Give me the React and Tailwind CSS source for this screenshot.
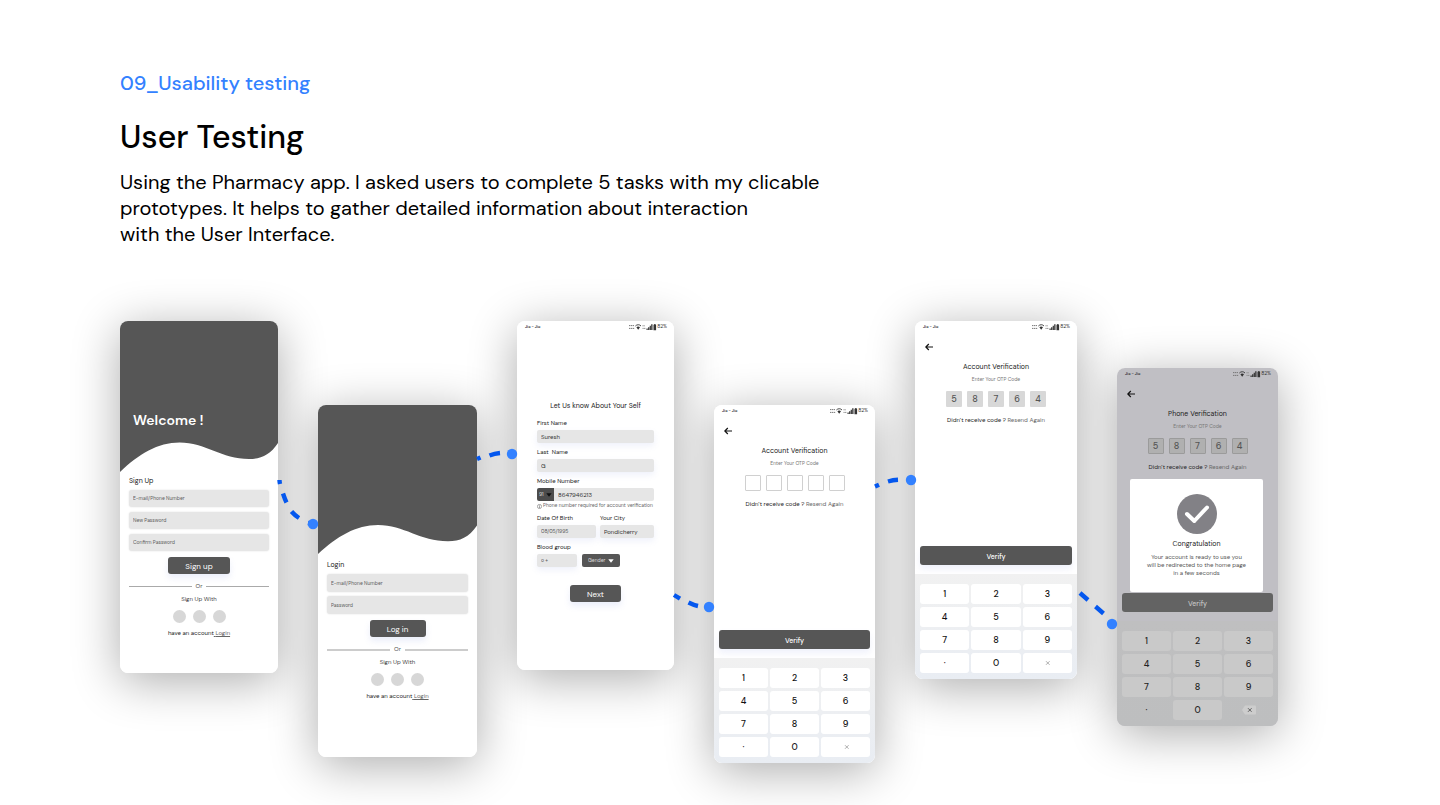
import React from "react";

const KEYS = ["1", "2", "3", "4", "5", "6", "7", "8", "9", "·", "0"];

function Phone({ className, children }) {
  return (
    <article
      className={
        "relative flex min-w-[156px] basis-0 flex-col rounded-lg before:absolute before:inset-0 before:-z-10 before:rounded-lg before:shadow-[0_8px_48px_rgba(0,0,0,0.33)] before:content-[''] " +
        className
      }
    >
      {children}
    </article>
  );
}

function Connector({ className, d, cx, cy }) {
  return (
    <svg
      className={"z-10 w-10 flex-none overflow-visible " + className}
      viewBox="0 0 40 60"
      height="60"
      aria-hidden="true"
    >
      <path d={d} fill="none" stroke="#0457ee" strokeWidth="4.4" />
      <circle cx={cx} cy={cy} r="5.2" fill="#3381ff" />
    </svg>
  );
}

function StatusBar() {
  return (
    <div className="flex h-[11px] items-center justify-between pl-2 pr-[7px] leading-none text-[#333]">
      <span className="text-[4px] font-semibold">Jio - Jio</span>
      <span className="flex items-center text-[5px]">
        <svg width="28" height="8" viewBox="0 0 28 8" fill="#333" aria-hidden="true">
          <path d="M0 2.600h5M0 5.400h5.600" stroke="#777" strokeWidth="1" strokeDasharray="1.400 0.500" />
          <path d="M7.400 4.300C8.400 3.300 10 3.300 11 4.300L9.200 6.700Z" />
          <path d="M6.400 3C8 1.300 10.500 1.300 12 3" fill="none" stroke="#333" strokeWidth=".9" />
          <path d="M13.500 2.800h2.300M13.500 5.400h3.300" stroke="#888" strokeWidth="1" strokeDasharray="1.200 0.400" />
          <path d="M17.500 5.500h1.200v1.500h-1.200zM19.100 4.300h1.200V7h-1.200zM20.700 2.800h1.200V7h-1.200zM22.200 1.200h1.300V7h-1.300z" />
          <path d="M25.200 1h1.300v.8h.6V7.200h-2.600V1.800h.7z" />
        </svg>
        82%
      </span>
    </div>
  );
}

function Wave({ className }) {
  return (
    <svg className={"block w-full rounded-t-lg " + className} viewBox="0 0 159 151" preserveAspectRatio="none" aria-hidden="true">
      <path
        d="M0 0H159V122C151 134 142 138 130 138C102 138 86 121.500 60 121.500C38 121.500 19 133 0 151Z"
        fill="#565656"
      />
    </svg>
  );
}

function AuthForm({ title, fields, action, buttonClass, inputClass, lineClass, gapClass }) {
  return (
    <form className="flex flex-col px-[9px]" onSubmit={(e) => e.preventDefault()}>
      <h2 className="text-[7px] leading-[10px] text-[#222]">{title}</h2>
      <div className={"flex flex-col " + gapClass}>
        {fields.map((field) => (
          <input
            key={field}
            type={field.includes("Password") ? "password" : "text"}
            aria-label={field}
            placeholder={field}
            className={
              "w-full rounded-[3px] bg-[#e6e6e6] px-1 text-[5px] shadow-[0_0_2px_rgba(0,0,0,0.12)] placeholder:text-[#5c5c5c] " +
              inputClass
            }
          />
        ))}
      </div>
      <button
        type="submit"
        className={"mt-1.5 h-[17px] self-center rounded-[3px] bg-[#565656] text-[8px] leading-none text-white shadow-[0_4px_6px_rgba(120,140,220,0.15)] " + buttonClass}
      >
        {action}
      </button>
      <div className="mt-2 flex items-center gap-1 text-[6px] leading-[9px] text-[#555]">
        <span className={"flex-1 " + lineClass} />
        Or
        <span className={"flex-1 " + lineClass} />
      </div>
      <p className="mt-1 text-center text-[6px] leading-2 text-[#444]">Sign Up With</p>
      <div className="mt-[7px] flex justify-center gap-[7px]">
        {["first", "second", "third"].map((p) => (
          <button key={p} type="button" aria-label={"Sign up with " + p + " provider"} className="size-[13px] rounded-full bg-[#d7d7d7]" />
        ))}
      </div>
      <p className="mt-1.5 text-center text-[6px] leading-2 text-[#222]">
        have an account
        <a href="#login" className="text-[#666] underline">
          {" "}
          Login
        </a>
      </p>
    </form>
  );
}

function Field({ id, label, value, className = "", muted = false }) {
  return (
    <div className={"flex min-w-0 flex-col gap-[3px] " + className}>
      <label htmlFor={id} className="whitespace-pre text-[6px] leading-2 text-[#222]">
        {label}
      </label>
      <input
        id={id}
        defaultValue={value}
        className={
          "h-[13px] w-full rounded-[2px] bg-[#e6e6e6] px-1 shadow-[0_3px_6px_rgba(120,140,220,0.12)] " +
          (muted ? "text-[5px] text-[#555]" : "text-[6px] text-[#333]")
        }
      />
    </div>
  );
}

function Caret({ className }) {
  return (
    <svg className={"pointer-events-none absolute " + className} width="6" height="4" viewBox="0 0 6 4" aria-hidden="true">
      <path d="M.3.300h5.400L3 3.800Z" fill="currentColor" />
    </svg>
  );
}

function ProfileForm() {
  return (
    <form className="flex flex-col px-5 pt-[69px]" onSubmit={(e) => e.preventDefault()}>
      <h2 className="text-center text-[7px] leading-[10px] text-[#222]">Let Us know About Your Self</h2>
      <div className="mt-2 flex flex-col gap-[5px]">
        <Field id="first" label="First Name" value="Suresh" />
        <Field id="last" label="Last  Name" value="G" />
        <div className="flex flex-col gap-[3px]">
          <label htmlFor="mobile" className="text-[6px] leading-2 text-[#222]">
            Mobile Number
          </label>
          <div className="flex">
            <div className="relative w-[17px] flex-none">
              <select aria-label="Country code" className="block h-[13px] w-full appearance-none rounded-l-[2px] bg-[#4c4c4c] pl-[2px] text-[5px] text-[#ddd]">
                <option>91</option>
              </select>
              <Caret className="right-[2px] top-[5px] text-[#111]" />
            </div>
            <input id="mobile" type="tel" defaultValue="8647946213" className="h-[13px] w-full min-w-0 rounded-r-[2px] bg-[#e6e6e6] px-1 text-[6px] text-[#333]" />
          </div>
        </div>
      </div>
      <p className="mt-px flex items-center gap-px whitespace-nowrap text-[5px] leading-2 text-[#666]">
        <svg width="5" height="5" viewBox="0 0 10 10" fill="none" stroke="#555" className="flex-none" aria-hidden="true">
          <circle cx="5" cy="5" r="4.200" />
          <path d="M5 2.200v1.200M5 4.500v3.300" strokeWidth="1.300" />
        </svg>
        Phone number required for account verification
      </p>
      <div className="mt-1 flex gap-1">
        <Field id="birth" label="Date Of Birth" value="08/05/1995" className="flex-[59]" muted />
        <Field id="city" label="Your City" value="Pondicherry" className="flex-[54]" />
      </div>
      <div className="mt-[5px] flex items-end gap-[5px]">
        <Field id="blood" label="Blood group" value="o +" className="w-10" muted />
        <div className="relative w-[38px]">
          <select aria-label="Gender" className="block h-[13px] w-full appearance-none rounded-[2px] bg-[#565656] pl-1.5 text-[5px] text-[#ddd]">
            <option>Gender</option>
          </select>
          <Caret className="right-1.5 top-[5px] text-white" />
        </div>
      </div>
      <button type="submit" className="mt-[18px] h-[17px] w-[51px] self-center rounded-[3px] bg-[#565656] text-[8px] leading-none text-white shadow-[0_4px_6px_rgba(120,140,220,0.15)]">
        Next
      </button>
    </form>
  );
}

function Verification({ title, code, boxClass, dim = false }) {
  return (
    <>
      <StatusBar />
      <button type="button" aria-label="Back" className="ml-2.5 mt-[11px] h-2 w-2">
        <svg viewBox="0 0 8 8" fill="none" stroke="#111" strokeWidth="1.200" aria-hidden="true">
          <path d="M8 4H.8M3.800 1L.8 4l3 3" />
        </svg>
      </button>
      <h2 className="mt-[11px] text-center text-[7px] leading-[10px] text-[#222]">{title}</h2>
      <p className="mt-1 text-center text-[5px] leading-2 text-[#777]">Enter Your OTP Code</p>
      <div className="mt-[7px] flex justify-center gap-[5px]">
        {code.map((digit, i) => (
          <input
            key={i}
            aria-label={"Digit " + (i + 1)}
            defaultValue={digit}
            maxLength={1}
            className={"size-4 rounded-[1px] text-center text-[9px] font-medium text-[#555] " + boxClass}
          />
        ))}
      </div>
      <p className="mt-[9px] whitespace-nowrap text-center text-[6px] leading-[9px] text-[#222]">
        Didn’t receive code ?{" "}
        <a href="#resend" className="text-[#666]">
          Resend Again
        </a>
      </p>
      <button
        type="button"
        className={
          "mx-[5px] mt-[121px] h-[19px] rounded-[3px] pt-px text-[7px] font-medium leading-none " +
          (dim ? "bg-[#636363] text-[#c4c4c4]" : "bg-[#565656] text-white shadow-[0_4px_6px_rgba(120,140,220,0.12)]")
        }
      >
        Verify
      </button>
      <div
        className={
          "mt-[9px] grid grid-cols-3 gap-x-[2px] gap-y-[3px] rounded-b-lg px-[5px] pb-1.5 pt-2.5 " +
          (dim ? "bg-linear-to-b from-[#bfbfc0] to-[#bdbebf]" : "bg-linear-to-b from-[#f1f1f1] to-[#e9edf3]")
        }
      >
        {KEYS.map((key) => (
          <button
            key={key}
            type="button"
            className={
              "h-5 rounded-[3px] text-[9px] font-medium leading-none " +
              (dim ? (key === "·" ? "text-[#222]" : "bg-[#c9c9c9] text-[#222]") : "bg-white text-[#111]")
            }
          >
            {key}
          </button>
        ))}
        <button type="button" aria-label="Delete" className={"flex h-5 items-center justify-center rounded-[3px] " + (dim ? "" : "bg-white")}>
          <svg width="16" height="10" viewBox="0 0 16 10" fill="none" aria-hidden="true">
            {dim && <path d="M4 .5h10q1 0 1 1v7q0 1-1 1H4L1 5Z" fill="#cdcdcd" />}
            <path d="M7 3.200l3.600 3.600M10.600 3.200L7 6.800" stroke={dim ? "#444" : "#999"} strokeWidth=".8" />
          </svg>
        </button>
      </div>
    </>
  );
}

export default function App() {
  return (
    <main className="min-h-screen bg-white pb-10 pl-[120px] pr-[162px] pt-[70px] font-['DM_Sans','Inter',sans-serif] text-black">
      <header>
        <p className="text-[20px] font-medium leading-[26px] text-[#3381ff]">09_Usability testing</p>
        <h1 className="mt-[21px] text-[32px] font-medium leading-10">User Testing</h1>
        <p className="mt-3 text-[20px] leading-[26px]">
          Using the Pharmacy app. I asked users to complete 5 tasks with my clicable
          <br />
          prototypes. It helps to gather detailed information about interaction
          <br />
          with the User Interface.
        </p>
      </header>

      <section aria-label="Prototype screens" className="isolate mt-[74px] flex items-start">
        <Phone className="grow-[158] bg-white pb-9">
          <div className="relative">
            <Wave className="h-[151px]" />
            <h2 className="absolute left-[13px] top-[90px] text-[14px] font-semibold leading-[18px] text-white">Welcome !</h2>
          </div>
          <div className="mt-1">
            <AuthForm
              title="Sign Up"
              fields={["E-mail/Phone Number", "New Password", "Confirm Password"]}
              action="Sign up"
              gapClass="mt-1 gap-[5px]"
              inputClass="h-[17px]"
              buttonClass="w-[62px]"
              lineClass="h-px bg-[#aaa]"
            />
          </div>
        </Phone>
        <Connector className="mt-[149px]" d="M1.500 10q0 2 .5 4M5 23.500q2 6 3.500 9M13.500 41.500q3.500 4 7.500 6.500M30 53l5 1" cx="35" cy="54" />

        <Phone className="mt-[84px] grow-[159] bg-white pb-[57px]">
          <Wave className="h-[149px]" />
          <div className="mt-1.5">
            <AuthForm
              title="Login"
              fields={["E-mail/Phone Number", "Password"]}
              action="Log in"
              gapClass="mt-1 gap-1"
              inputClass="h-[18px]"
              buttonClass="w-14"
              lineClass="h-0.5 bg-[#ccc]"
            />
          </div>
        </Phone>
        <Connector className="mt-[109px]" d="M0 29l3.500-1.500M12.500 25.500q5-2 10.500-2.500" cx="35" cy="24" />

        <Phone className="grow-[157] bg-white pb-[68px]">
          <StatusBar />
          <ProfileForm />
        </Phone>
        <Connector className="mt-[249px]" d="M0 25l6 3.700M14.500 32.500q5 2.500 9.500 3.500" cx="35" cy="37" />

        <Phone className="mt-[84px] grow-[161] bg-white">
          <Verification title="Account Verification" code={["", "", "", "", ""]} boxClass="border border-[#d0d0d0] bg-white" />
        </Phone>
        <Connector className="mt-[134px]" d="M0 31.500l4-1.800M13 26.500q5-1.500 10-1.700" cx="36" cy="25" />

        <Phone className="grow-[162] bg-white">
          <Verification title="Account Verification" code={["5", "8", "7", "6", "4"]} boxClass="bg-[#d8d8d8]" />
        </Phone>
        <Connector className="mt-[259px]" d="M3 13l8 7M18.500 26.500l8 7" cx="35" cy="44" />

        <Phone className="mt-[47px] grow-[161] bg-[#c0bfc4]">
          <Verification title="Phone Verification" code={["5", "8", "7", "6", "4"]} boxClass="border border-[#9b9b9b] bg-[#b0b0b0]" dim />
          <div role="dialog" aria-label="Congratulation" className="absolute left-[13px] right-[15px] top-[111px] flex h-[113px] flex-col items-center rounded-[2px] bg-white pt-[15px]">
            <svg width="40" height="40" viewBox="0 0 40 40" fill="none" aria-hidden="true">
              <circle cx="20" cy="20" r="20" fill="#828186" />
              <path d="M10 20l7.300 7L30 13.500" stroke="#fff" strokeWidth="4" strokeLinecap="round" strokeLinejoin="round" />
            </svg>
            <h3 className="mt-[6px] text-[7px] leading-2 text-[#222]">Congratulation</h3>
            <p className="mt-[5px] whitespace-nowrap text-center text-[6px] leading-2 text-[#555]">
              Your account is ready to use you
              <br />
              will be redirected to the home page
              <br />
              in a few seconds
            </p>
          </div>
        </Phone>
      </section>
    </main>
  );
}
